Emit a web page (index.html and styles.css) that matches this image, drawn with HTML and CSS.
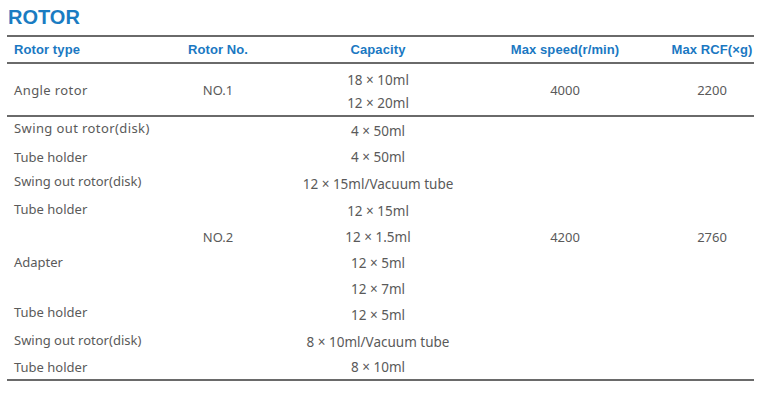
FILE: index.html
```html
<!DOCTYPE html>
<html>
<head>
<meta charset="utf-8">
<link rel="stylesheet" href="styles.css">
</head>
<body>
<div class="page">
  <h1 class="title">ROTOR</h1>
  <div class="table">
    <div class="grid thead">
      <div class="c1">Rotor type</div>
      <div class="cc">Rotor No.</div>
      <div class="cc">Capacity</div>
      <div class="cc">Max speed(r/min)</div>
      <div class="cc">Max RCF(×g)</div>
    </div>
    <div class="grid g1">
      <div class="c1 wide">Angle rotor</div>
      <div class="cc">NO.1</div>
      <div class="cc cap stack"><span>18 × 10ml</span><span>12 × 20ml</span></div>
      <div class="cc">4000</div>
      <div class="cc">2200</div>
    </div>
    <div class="grid g2">
      <div class="c1 up5 wide">Swing out rotor(disk)</div><div></div><div class="cc cap">4 × 50ml</div><div></div><div></div>
      <div class="c1">Tube holder</div><div></div><div class="cc cap">4 × 50ml</div><div></div><div></div>
      <div class="c1 up5">Swing out rotor(disk)</div><div></div><div class="cc cap">12 × 15ml/Vacuum tube</div><div></div><div></div>
      <div class="c1 up3">Tube holder</div><div></div><div class="cc cap">12 × 15ml</div><div></div><div></div>
      <div></div><div class="cc">NO.2</div><div class="cc cap">12 × 1.5ml</div><div class="cc">4200</div><div class="cc">2760</div>
      <div class="c1 up3">Adapter</div><div></div><div class="cc cap">12 × 5ml</div><div></div><div></div>
      <div></div><div></div><div class="cc cap">12 × 7ml</div><div></div><div></div>
      <div class="c1 up5">Tube holder</div><div></div><div class="cc cap">12 × 5ml</div><div></div><div></div>
      <div class="c1 up3">Swing out rotor(disk)</div><div></div><div class="cc cap">8 × 10ml/Vacuum tube</div><div></div><div></div>
      <div class="c1">Tube holder</div><div></div><div class="cc cap">8 × 10ml</div><div></div><div></div>
    </div>
  </div>
</div>
</body>
</html>
```
FILE: styles.css
```css
html, body {
  margin: 0;
  padding: 0;
  background: #ffffff;
}
.page {
  padding: 5px 0 0 7px;
  width: 747px;
}
.title {
  margin: 0 0 6px 1px;
  font-family: "Liberation Sans", Arial, sans-serif;
  font-weight: bold;
  font-size: 20px;
  line-height: 24px;
  color: #1a7cc2;
}
.table {
  border-top: 2px solid #6a6a6a;
}
.grid {
  display: grid;
  grid-template-columns: 133px 156px 164px 210px 84px;
  border-bottom: 2px solid #6a6a6a;
  font-family: "Noto Sans", "Open Sans", sans-serif;
  font-size: 13px;
  color: #5a5a5a;
}
.grid > div {
  display: flex;
  align-items: center;
  white-space: nowrap;
}
.c1 {
  padding-left: 7px;
}
.wide {
  letter-spacing: 0.4px;
}
.cc {
  justify-content: center;
}
.cap {
  font-size: 13.5px;
}
.thead {
  height: 25px;
  font-family: "Liberation Sans", Arial, sans-serif;
  font-weight: bold;
  font-size: 13px;
  letter-spacing: 0.1px;
  color: #1a78c2;
}
.g1 {
  height: 51px;
}
.stack {
  flex-direction: column;
  line-height: 23px;
  padding-top: 5px;
}
.g2 {
  grid-template-rows: 27px 26px 27px 27px 25px 28px 24px 27px 27px 24px;
}
.up5 {
  padding-bottom: 5px;
}
.up3 {
  padding-bottom: 3px;
}
```
